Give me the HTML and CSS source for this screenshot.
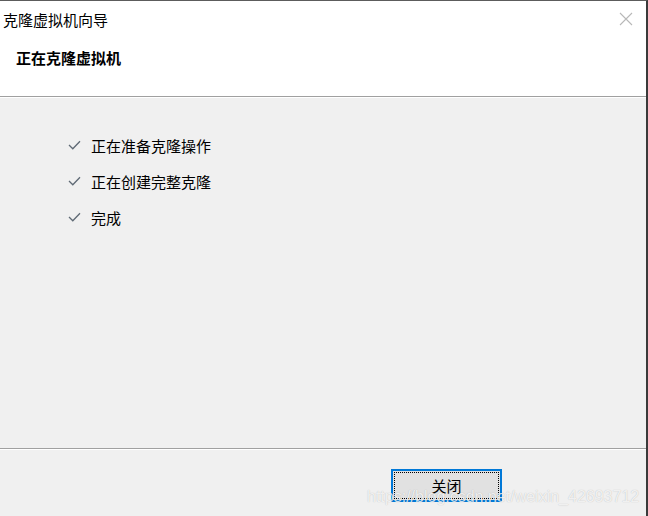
FILE: index.html
```html
<!DOCTYPE html>
<html lang="zh-CN">
<head>
<meta charset="utf-8">
<title>克隆虚拟机向导</title>
<link rel="stylesheet" href="styles.css">
</head>
<body>
<div class="window">
  <header class="top">
    <div class="titlebar">
      <span class="title">克隆虚拟机向导</span>
      <span class="close">
        <svg width="14" height="14" viewBox="0 0 14 14"><path d="M1 1 L13 13 M13 1 L1 13" stroke="#b8b8b8" stroke-width="1.1" fill="none"/></svg>
      </span>
    </div>
    <div class="heading">正在克隆虚拟机</div>
  </header>
  <main class="content">
    <ul class="steps">
      <li class="step"><svg class="check" width="13" height="10" viewBox="0 0 13 10"><path d="M1 5 L4.8 8.8 L12 1.2" stroke="#5f6a75" stroke-width="1.3" fill="none"/></svg><span>正在准备克隆操作</span></li>
      <li class="step"><svg class="check" width="13" height="10" viewBox="0 0 13 10"><path d="M1 5 L4.8 8.8 L12 1.2" stroke="#5f6a75" stroke-width="1.3" fill="none"/></svg><span>正在创建完整克隆</span></li>
      <li class="step"><svg class="check" width="13" height="10" viewBox="0 0 13 10"><path d="M1 5 L4.8 8.8 L12 1.2" stroke="#5f6a75" stroke-width="1.3" fill="none"/></svg><span>完成</span></li>
    </ul>
  </main>
  <footer class="footer">
    <button class="btn"><span class="focus">关闭</span></button>
    <span class="watermark">https://blog.csdn.net/weixin_42693712</span>
  </footer>
</div>
</body>
</html>
```
FILE: styles.css
```css
html, body {
  margin: 0;
  padding: 0;
}
body {
  width: 648px;
  height: 516px;
  overflow: hidden;
  font-family: "Noto Sans CJK SC", "Microsoft YaHei", sans-serif;
  color: #000;
  background: #f0f0f0;
}
.window {
  box-sizing: border-box;
  width: 648px;
  height: 516px;
  border-top: 1px solid #5c5c5c;
  border-right: 2px solid #3a3a3a;
  display: flex;
  flex-direction: column;
  position: relative;
}
.top {
  background: #fff;
  height: 95px;
  border-bottom: 1px solid #a0a0a0;
  box-shadow: 0 1px 0 #ffffff;
  flex: none;
}
.titlebar {
  height: 38px;
  display: flex;
  align-items: center;
  justify-content: space-between;
  padding-left: 3px;
  padding-right: 13px;
}
.title {
  font-size: 15px;
  line-height: 38px;
  letter-spacing: 0;
}
.close {
  display: flex;
  margin-top: -2px;
}
.heading {
  padding-left: 16px;
  padding-top: 9px;
  font-size: 15px;
  line-height: 20px;
  font-weight: bold;
}
.content {
  flex: 1;
  margin-top: 1px;
  border-bottom: 1px solid #a0a0a0;
}
.steps {
  list-style: none;
  margin: 0;
  padding: 29px 0 0 68px;
}
.step {
  height: 36px;
  display: flex;
  align-items: center;
  font-size: 15px;
}
.check {
  margin-right: 10px;
  flex: none;
}
.footer {
  height: 67px;
  box-sizing: border-box;
  border-top: 1px solid #ffffff;
  padding: 19px 0 0 391px;
  flex: none;
  position: relative;
}
.btn {
  box-sizing: border-box;
  width: 111px;
  height: 33px;
  padding: 1px;
  margin: 0;
  border: 2px solid #0078d7;
  background: #e1e1e1;
  font-family: inherit;
  font-size: 15px;
  color: #000;
  display: flex;
}
.focus {
  flex: 1;
  border: 1px dotted #000;
  display: flex;
  align-items: center;
  justify-content: center;
  line-height: 20px;
}
.watermark {
  position: absolute;
  left: 367px;
  top: 38px;
  font-family: "Liberation Sans", Arial, sans-serif;
  font-size: 16px;
  line-height: 18px;
  color: rgba(255, 255, 255, 0.8);
  text-shadow: 0 0 1px rgba(0, 0, 0, 0.25);
  white-space: nowrap;
}
```
